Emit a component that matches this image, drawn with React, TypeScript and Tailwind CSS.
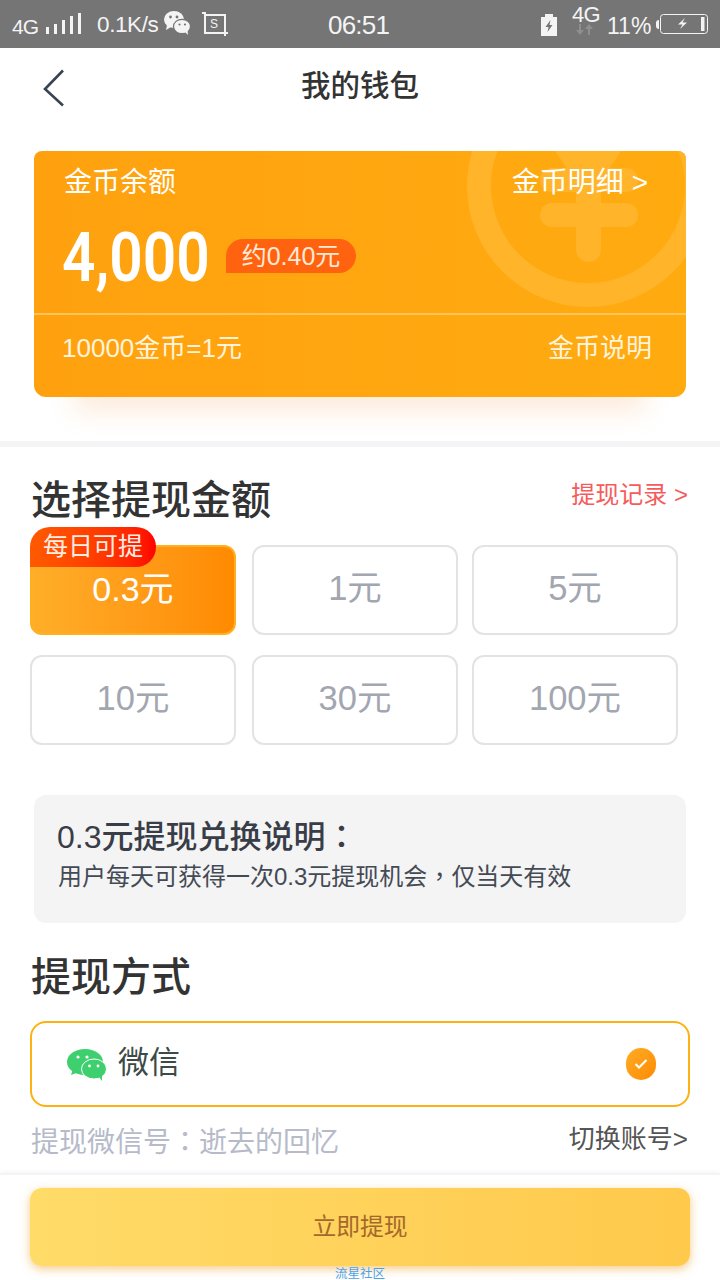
import React from "react";

const CJK = "font-['Liberation_Sans','Noto_Sans_CJK_SC',sans-serif]";

function Punct({ children }: { children: string }) {
  return <span className="font-['Noto_Sans_CJK_TC',sans-serif]">{children}</span>;
}

function Amount({ label, cls }: { label: string; cls: string }) {
  return (
    <div className={`w-[206px] h-[90px] rounded-xl border-2 border-[#e2e3e5] flex items-center justify-center pb-[2px] text-[34.5px] text-[#a2a6b0] ${cls}`}>
      {label}
    </div>
  );
}

function StatusBar() {
  return (
    <div className="h-12 bg-[#757575] text-[#f4f4f4] flex items-center relative font-['Liberation_Sans','Noto_Sans_CJK_SC',sans-serif] shrink-0">
      <span className="ml-3 mt-[5px] text-[21px] tracking-[-1px]">4G</span>
      <svg width="36" height="22" viewBox="0 0 36 22" className="ml-[8px] -mt-[1px]" fill="#f4f4f4">
        <rect x="0" y="14" width="3" height="7" />
        <rect x="8" y="11" width="3" height="10" />
        <rect x="16" y="7" width="3" height="14" />
        <rect x="24" y="3" width="3" height="18" />
        <rect x="32" y="0" width="3" height="21" />
      </svg>
      <span className="ml-[15px] mt-[1px] text-[22.5px] tracking-[-0.4px]">0.1K/s</span>
      <svg width="26" height="24" viewBox="0 0 26 24" className="ml-[6px] -mt-[2px]" fill="#f4f4f4">
        <ellipse cx="10" cy="8.5" rx="10" ry="8.5" />
        <path d="M3 14l-1 5 5-3z" />
        <ellipse cx="18" cy="15.5" rx="8.5" ry="7.2" stroke="#757575" strokeWidth="1.2" />
        <path d="M21 21l3 3-.5-5z" />
        <circle cx="6.5" cy="6" r="1.4" fill="#757575" />
        <circle cx="13" cy="6" r="1.4" fill="#757575" />
        <circle cx="15.5" cy="13.5" r="1.1" fill="#757575" />
        <circle cx="21" cy="13.5" r="1.1" fill="#757575" />
      </svg>
      <svg width="26" height="24" viewBox="0 0 26 24" className="ml-[12px] -mt-[1px]" fill="none" stroke="#f4f4f4" strokeWidth="2">
        <path d="M0 1h4M3 1v20h20V3H3" />
        <path d="M23 21v3M23 21h3" />
        <text x="8" y="16" fontSize="12" fill="#f4f4f4" stroke="none" fontFamily="Liberation Sans">S</text>
      </svg>
      <span className="absolute left-[328px] top-[9px] text-[26px] leading-[32px] tracking-[-0.8px]">06:51</span>
      <svg width="16" height="22" viewBox="0 0 16 22" className="absolute left-[541px] top-[14px]" fill="#f4f4f4">
        <path d="M0 3h4V0h8v3h4v19H0z" />
        <path d="M9.5 6L4.5 13h3l-1 5 5-7h-3z" fill="#757575" />
      </svg>
      <span className="absolute left-[572px] top-[3px] text-[22px] leading-[24px] tracking-[-0.8px]">4G</span>
      <svg width="20" height="12" viewBox="0 0 20 12" className="absolute left-[575px] top-[24px]" fill="#8f8f8f">
        <path d="M4 0h2v6h3l-4 5-4-5h3z" />
        <path d="M14 0l4 5h-3v6h-2V5h-3z" />
      </svg>
      <span className="absolute left-[607px] top-[11px] text-[23px] leading-[30px]">11%</span>
      <div className="absolute left-[656px] top-[20px] w-[3px] h-[9px] rounded-l-sm bg-[#f4f4f4]" />
      <svg width="49" height="20" viewBox="0 0 49 20" className="absolute left-[660px] top-[14px]" fill="none">
        <rect x="0.5" y="0.5" width="47" height="19" rx="3" stroke="#f4f4f4" />
        <rect x="41" y="3" width="3.5" height="14" fill="#f4f4f4" />
        <path d="M25 4l-7 6.5h4.5L20 15l7-6.5h-4.5z" fill="#f4f4f4" />
      </svg>
    </div>
  );
}

function Coin() {
  return (
    <svg width="652" height="246" viewBox="0 0 652 246" className="absolute left-0 top-0" fill="none">
      <circle cx="554" cy="35" r="109" stroke="#ffb429" strokeWidth="24" />
      <path d="M521 0H587L567 30V56H542V30Z" fill="#ffb429" />
      <rect x="506" y="17" width="98" height="24" rx="12" fill="#ffb429" />
      <rect x="506" y="52" width="98" height="24" rx="12" fill="#ffb429" />
      <rect x="542" y="56" width="25" height="55" rx="12.5" fill="#ffb429" />
    </svg>
  );
}

export default function App() {
  return (
    <div className={`w-[720px] h-[1280px] bg-white flex flex-col overflow-hidden relative ${CJK}`}>
      <StatusBar />

      <div className="h-[78px] shrink-0 flex items-center justify-center relative">
        <svg width="24" height="38" viewBox="0 0 24 38" className="absolute left-[42px] top-[21px]" fill="none" stroke="#3a4352" strokeWidth="2.6">
          <path d="M21 1.5L3 20l18 16.5" />
        </svg>
        <span className="text-[29.5px] font-medium text-[#333] -mt-[1px]">我的钱包</span>
      </div>

      <div className="mx-[34px] mt-[25px] h-[246px] shrink-0 relative rounded-t-lg rounded-b-[12px] bg-gradient-to-r from-[#ffa10f] to-[#ffab10] shadow-[0_55px_24px_-40px_rgba(247,160,90,0.2)] text-white overflow-hidden">
        <Coin />
        <div className="relative h-[164px] border-b-2 border-[#ffc45a] pl-[30px] pr-[38px]">
          <div className="flex justify-between pt-[12px] text-[28px] leading-[40px]">
            <span>金币余额</span>
            <span>金币明细 &gt;</span>
          </div>
          <div className="flex items-center mt-[17px]">
            <span className="inline-block w-[146px] -ml-[2px] text-[69px] leading-[76px] font-semibold font-['Roboto',sans-serif] origin-left scale-x-[0.85] whitespace-nowrap">4,000</span>
            <span className="ml-[18px] -mt-[4px] w-[130px] h-[34px] rounded-r-[17px] rounded-tl-[17px] bg-[#ff6310] text-[25px] leading-[34px] text-center text-[#ffe9d6]">约0.40元</span>
          </div>
        </div>
        <div className="relative flex justify-between pl-[28px] pr-[34px] pt-[15px] text-[26px] leading-[36px] text-[#fff3dc]">
          <span>10000金币=1元</span>
          <span>金币说明</span>
        </div>
      </div>

      <div className="h-[6px] mt-[44px] bg-[#f5f5f5] shrink-0" />

      <div className="flex justify-between items-start mx-[30px] mt-[26px] shrink-0">
        <span className="text-[40px] leading-[54px] font-medium text-[#333] ml-[1px]">选择提现金额</span>
        <span className="text-[24px] leading-[34px] text-[#f65b5b] mt-[5px] -mr-[-2px]">提现记录 &gt;</span>
      </div>

      <div className="relative ml-[30px] mt-[18px] flex flex-wrap gap-x-4 gap-y-5 w-[660px] shrink-0">
        <div className="w-[206px] h-[90px] rounded-xl border-2 border-[#ffb01f] bg-gradient-to-r from-[#ffae28] to-[#ff8a00] flex items-center justify-center pb-[1px] text-[34px] text-white">0.3元</div>
        <Amount label="1元" cls="" />
        <Amount label="5元" cls="-ml-[2px]" />
        <Amount label="10元" cls="" />
        <Amount label="30元" cls="" />
        <Amount label="100元" cls="-ml-[2px]" />
        <div className="absolute left-0 -top-[18px] w-[126px] h-10 rounded-t-[20px] rounded-br-[20px] bg-gradient-to-r from-[#ff5a00] to-[#ff0000] text-[25px] leading-[38px] text-center text-[#ffece4]">每日可提</div>
      </div>

      <div className="mx-[34px] mt-[50px] h-[128px] rounded-xl bg-[#f4f4f4] pt-[19px] pl-[23px] shrink-0">
        <div className="text-[32px] leading-[40px] font-medium text-[#383d47]">0.3元提现兑换说明<Punct>：</Punct></div>
        <div className="text-[24px] leading-[36px] text-[#444a55] ml-[1px] whitespace-nowrap">用户每天可获得一次0.3元提现机会<Punct>，</Punct>仅当天有效</div>
      </div>

      <div className="mx-[30px] mt-[26px] text-[40px] leading-[56px] font-medium text-[#333] ml-[31px] shrink-0">提现方式</div>

      <div className="mx-[30px] mt-[16px] h-[86px] rounded-2xl border-2 border-[#ffb114] flex items-center shrink-0">
        <svg width="40" height="32" viewBox="0 0 40 32" className="ml-[35px] mt-[1px]">
          <ellipse cx="18" cy="13" rx="18" ry="13" fill="#3ecf6e" />
          <path d="M6 20l-2 6 8-3z" fill="#3ecf6e" />
          <ellipse cx="27" cy="20" rx="12.5" ry="10" fill="#3ecf6e" stroke="#fff" strokeWidth="1" />
          <path d="M32 28l3 4v-6z" fill="#3ecf6e" />
          <circle cx="11" cy="8" r="1.6" fill="#fff" />
          <circle cx="20" cy="8" r="1.6" fill="#fff" />
          <circle cx="22.5" cy="17" r="1.4" fill="#fff" />
          <circle cx="31" cy="17" r="1.4" fill="#fff" />
        </svg>
        <span className="ml-[11px] -mt-[3px] text-[31px] leading-[40px] text-[#3c4a48]">微信</span>
        <span className="ml-auto mr-[32px] w-[30px] h-[32px] rounded-full bg-gradient-to-br from-[#ffac22] to-[#ff8a00] flex items-center justify-center">
          <svg width="14" height="12" viewBox="0 0 14 12" fill="none" stroke="#fff" strokeWidth="2">
            <path d="M1.5 6l3.5 3.5 7.5-7.5" />
          </svg>
        </span>
      </div>

      <div className="mx-[30px] mt-[13px] flex justify-between items-start shrink-0">
        <span className="text-[28px] leading-[40px] text-[#b6bac9] ml-[1px]">提现微信号<Punct>：</Punct>逝去的回忆</span>
        <span className="text-[26px] leading-[36px] text-[#555] mt-[1px] -mr-[-2px]">切换账号&gt;</span>
      </div>

      <div className="mt-[10px] flex-1 border-t-2 border-[#f4f4f4] shadow-[0_-2px_4px_rgba(0,0,0,0.03)] flex flex-col items-center">
        <div className="mt-[13px] w-[660px] h-[78px] rounded-xl bg-gradient-to-r from-[#ffdb68] to-[#ffc94b] shadow-[0_3px_10px_rgba(240,170,60,0.6)] flex items-center justify-center text-[23.8px] text-[#a3692b]">立即提现</div>
        <div className="text-[12.5px] leading-[14px] mt-[1px] text-[#4aa3ea]">流星社区</div>
      </div>
    </div>
  );
}
